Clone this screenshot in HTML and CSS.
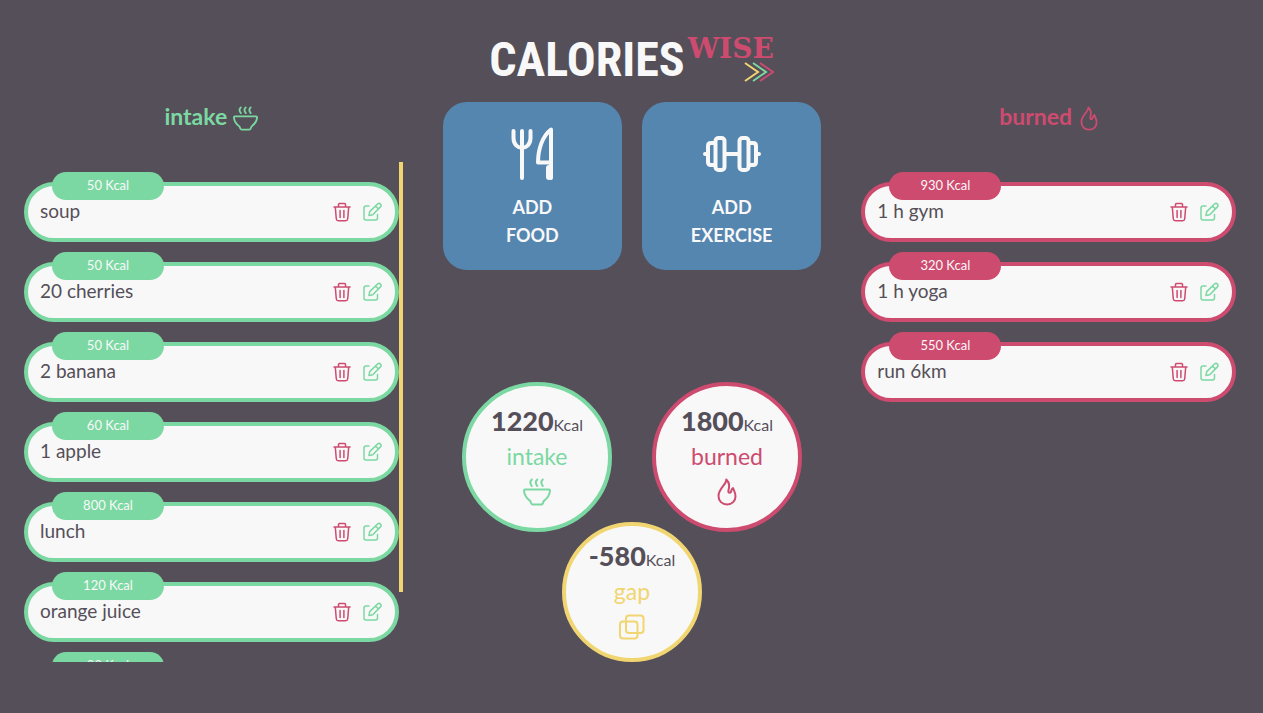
FILE: index.html
```
<!DOCTYPE html>
<html lang="en">
<head>
<meta charset="utf-8">
<meta name="viewport" content="width=device-width, initial-scale=1">
<title>Calories Wise</title>
<link rel="stylesheet" href="styles.css">
</head>
<body>
<svg class="sprite" aria-hidden="true">
  <symbol id="trash" viewBox="0 0 18 20"><path d="M1 5h16M5.500 5V2.500Q5.500 1.500 6.500 1.500h5q1 0 1 1V5M2.300 5l1 12q.2 1.800 2 1.800h7.400q1.800 0 2-1.800l1-12M7.100 8.500v7M10.900 8.500v7"/></symbol>
  <symbol id="edit" viewBox="0 0 20 20"><path d="M6 4H3Q1 4 1 6v10q0 2 2 2h9.500q2 0 2-2v-3.500M6 13.500l.7-3.900L14.500 2q1.600-1.300 2.900 0 1.300 1.400 0 2.900l-7.700 7.800zM12.500 4l3 3"/></symbol>
  <symbol id="bowl" viewBox="0 0 28 28"><path d="M2 11.500h24q1 0 1 1.200-.4 5.800-6.300 10.400l-1 2.400q-.4 1-1.400 1H9.700q-1 0-1.400-1l-1-2.400Q1.400 18.500 1 12.700q0-1.200 1-1.200zM8.800 1.500q-3 2.800 0 6.500M14.300 1.500q-3 2.800 0 6.500M19.800 1.500q-3 2.800 0 6.500"/></symbol>
  <symbol id="flame" viewBox="0 0 20 28"><path d="M9.300 1.500c.3 5-7.800 9-7.800 16.500 0 5 3.700 8.500 8.600 8.500 5 0 8.400-3.500 8.400-8.300 0-3.500-1.600-5.600-2.500-8.100-1.500 1-1.700 2.300-2 3.700-1.100 1.500-3.300 1.200-2.500-1.200.8-4.100 1.500-7.600-2.200-11.100z"/></symbol>
  <symbol id="gap" viewBox="0 0 28 28"><rect x="8" y="2.500" width="17.500" height="17.500" rx="3"/><rect x="2" y="8.500" width="17.500" height="17" rx="3"/></symbol>
</svg>

<header class="header">
  <h1 class="logo">
    <span class="logo-main">CALORIES</span>
    <span class="logo-side">
      <span class="logo-wise">WISE</span>
      <svg class="logo-arrows" viewBox="0 0 30 20" aria-hidden="true">
        <path class="stroke-yellow" d="M1 1l13 9-13 9"/>
        <path class="stroke-green" d="M9 1l13 9-13 9"/>
        <path class="stroke-red" d="M16 1l13 9-13 9"/>
      </svg>
    </span>
  </h1>
</header>

<main class="board">
  <section class="column green">
    <h2 class="column-title">intake <svg class="icon title-bowl"><use href="#bowl"/></svg></h2>
    <div class="scroller">
      <ul class="list">
        <li class="card"><span class="badge">50 Kcal</span><span class="name">soup</span><button class="tool trash" aria-label="Delete"><svg class="icon"><use href="#trash"/></svg></button><button class="tool edit" aria-label="Edit"><svg class="icon"><use href="#edit"/></svg></button></li>
        <li class="card"><span class="badge">50 Kcal</span><span class="name">20 cherries</span><button class="tool trash" aria-label="Delete"><svg class="icon"><use href="#trash"/></svg></button><button class="tool edit" aria-label="Edit"><svg class="icon"><use href="#edit"/></svg></button></li>
        <li class="card"><span class="badge">50 Kcal</span><span class="name">2 banana</span><button class="tool trash" aria-label="Delete"><svg class="icon"><use href="#trash"/></svg></button><button class="tool edit" aria-label="Edit"><svg class="icon"><use href="#edit"/></svg></button></li>
        <li class="card"><span class="badge">60 Kcal</span><span class="name">1 apple</span><button class="tool trash" aria-label="Delete"><svg class="icon"><use href="#trash"/></svg></button><button class="tool edit" aria-label="Edit"><svg class="icon"><use href="#edit"/></svg></button></li>
        <li class="card"><span class="badge">800 Kcal</span><span class="name">lunch</span><button class="tool trash" aria-label="Delete"><svg class="icon"><use href="#trash"/></svg></button><button class="tool edit" aria-label="Edit"><svg class="icon"><use href="#edit"/></svg></button></li>
        <li class="card"><span class="badge">120 Kcal</span><span class="name">orange juice</span><button class="tool trash" aria-label="Delete"><svg class="icon"><use href="#trash"/></svg></button><button class="tool edit" aria-label="Edit"><svg class="icon"><use href="#edit"/></svg></button></li>
        <li class="card"><span class="badge">90 Kcal</span></li>
      </ul>
      <div class="track"><div class="thumb"></div></div>
    </div>
  </section>

  <section class="column center">
    <div class="actions">
      <button class="action">
        <svg class="action-icon" viewBox="0 0 60 60" aria-hidden="true"><path d="M11.500 7v7c0 13 17 13 17 0V7M20 7v47M49 54V5.500C40.500 12 36 25 36 38.500h13"/><path class="handle" d="M47 44v9"/></svg>
        <span>ADD<br>FOOD</span>
      </button>
      <button class="action">
        <svg class="action-icon" viewBox="0 0 60 60" aria-hidden="true"><path d="M3 30h2M23 30h14M55 30h2M13 19H9q-3 0-3 3v16q0 3 3 3h4M47 19h4q3 0 3 3v16q0 3-3 3h-4"/><rect x="13.500" y="14" width="9" height="32" rx="3"/><rect x="37.500" y="14" width="9" height="32" rx="3"/></svg>
        <span>ADD<br>EXERCISE</span>
      </button>
    </div>
    <div class="stats">
      <div class="stat green"><p class="amount"><strong>1220</strong>Kcal</p><p class="label">intake</p><svg class="icon stat-icon"><use href="#bowl"/></svg></div>
      <div class="stat red"><p class="amount"><strong>1800</strong>Kcal</p><p class="label">burned</p><svg class="icon stat-icon"><use href="#flame"/></svg></div>
      <div class="stat yellow"><p class="amount"><strong>-580</strong>Kcal</p><p class="label">gap</p><svg class="icon stat-icon"><use href="#gap"/></svg></div>
    </div>
  </section>

  <section class="column red">
    <h2 class="column-title">burned <svg class="icon title-flame"><use href="#flame"/></svg></h2>
    <div class="scroller">
      <ul class="list">
        <li class="card"><span class="badge">930 Kcal</span><span class="name">1 h gym</span><button class="tool trash" aria-label="Delete"><svg class="icon"><use href="#trash"/></svg></button><button class="tool edit" aria-label="Edit"><svg class="icon"><use href="#edit"/></svg></button></li>
        <li class="card"><span class="badge">320 Kcal</span><span class="name">1 h yoga</span><button class="tool trash" aria-label="Delete"><svg class="icon"><use href="#trash"/></svg></button><button class="tool edit" aria-label="Edit"><svg class="icon"><use href="#edit"/></svg></button></li>
        <li class="card"><span class="badge">550 Kcal</span><span class="name">run 6km</span><button class="tool trash" aria-label="Delete"><svg class="icon"><use href="#trash"/></svg></button><button class="tool edit" aria-label="Edit"><svg class="icon"><use href="#edit"/></svg></button></li>
      </ul>
      <div class="track"></div>
    </div>
  </section>
</main>
</body>
</html>
```
FILE: styles.css
```
:root {
  --dark: #554f59;
  --light: #f8f8f8;
  --green: #7bd8a2;
  --red: #ce4b70;
  --yellow: #f1d570;
  --blue: #5586b0;
}

* { box-sizing: border-box; }

body {
  margin: 0;
  height: 100vh;
  display: flex;
  flex-direction: column;
  overflow: hidden;
  background: var(--dark);
  color: var(--dark);
  font-family: Lato, "Open Sans", sans-serif;
}

h1, h2, p, ul { margin: 0; padding: 0; }
button { border: 0; padding: 0; font: inherit; cursor: pointer; }

.sprite { display: none; }

.icon {
  flex: none;
  fill: none;
  stroke: currentColor;
  stroke-width: 2;
  stroke-linecap: round;
  stroke-linejoin: round;
}

.green { --accent: var(--green); }
.red { --accent: var(--red); }
.yellow { --accent: var(--yellow); }

.header {
  flex: none;
  display: flex;
  justify-content: center;
  padding-top: 36px;
  height: 102px;
}

.logo { display: flex; gap: 3px; height: 48px; }

.logo-main {
  color: var(--light);
  font: bold 48px/48px "Roboto Condensed", Roboto, sans-serif;
}

.logo-side { display: flex; flex-direction: column; align-items: flex-end; }
.logo-wise { color: var(--red); font: bold 28px/26px "DejaVu Serif", serif; }
.logo-arrows { width: 30px; height: 20px; fill: none; stroke-width: 2; }
.stroke-yellow { stroke: var(--yellow); }
.stroke-green { stroke: var(--green); }
.stroke-red { stroke: var(--red); }

.board {
  flex: 1;
  min-height: 0;
  display: grid;
  grid-template-columns: repeat(3, minmax(0, 1fr));
  gap: 40px;
  padding: 0 23px 51px 24px;
}

.column { display: flex; flex-direction: column; min-height: 0; }

.column-title {
  flex: none;
  display: flex;
  justify-content: center;
  gap: 6px;
  height: 60px;
  padding-right: 4px;
  color: var(--accent);
  font-size: 23px;
  line-height: 28px;
}

.title-bowl { width: 25px; height: 25px; margin-top: 4px; }
.title-flame { width: 18px; height: 25px; margin: 4px 0 0 2px; }

.scroller { flex: 1; min-height: 0; display: flex; overflow: hidden; }

.list {
  flex: 1;
  display: flex;
  flex-direction: column;
  gap: 20px;
  padding-top: 20px;
  list-style: none;
}

.track { flex: none; width: 4px; }
.thumb { height: 86%; background: var(--yellow); }

.card {
  flex: none;
  position: relative;
  display: flex;
  align-items: center;
  gap: 12px;
  height: 60px;
  padding: 0 12px;
  border: 4px solid var(--accent);
  border-radius: 30px;
  background: var(--light);
}

.badge {
  position: absolute;
  top: -14px;
  left: 24px;
  width: 112px;
  height: 28px;
  border-radius: 14px;
  background: var(--accent);
  color: var(--light);
  font-size: 13px;
  line-height: 26px;
  text-align: center;
}

.name { flex: 1; padding-bottom: 2px; font-size: 19px; line-height: 24px; }
.tool { display: flex; background: none; }
.tool .icon { width: 18px; height: 20px; stroke-width: 1.500; }
.edit .icon { width: 20px; }
.trash { color: var(--red); }
.edit { color: var(--green); }

.center { justify-content: space-between; }

.actions { display: grid; grid-template-columns: 1fr 1fr; gap: 20px; }

.action {
  display: flex;
  flex-direction: column;
  align-items: center;
  gap: 9px;
  padding: 22px 12px 21px;
  border-radius: 24px;
  background: var(--blue);
  color: var(--light);
  font-size: 18px;
  font-weight: bold;
  line-height: 28px;
}

.action-icon {
  width: 60px;
  height: 60px;
  fill: none;
  stroke: currentColor;
  stroke-width: 4;
  stroke-linecap: round;
  stroke-linejoin: round;
}

.handle { stroke-width: 6; }

.stats {
  display: flex;
  flex-wrap: wrap;
  justify-content: center;
  column-gap: 40px;
}

.stat {
  display: flex;
  flex-direction: column;
  align-items: center;
  width: 150px;
  height: 150px;
  padding-top: 18px;
  border: 4px solid var(--accent);
  border-radius: 50%;
  background: var(--light);
}

.stat.yellow { width: 140px; height: 140px; margin-top: -10px; padding-top: 13px; }

.amount { font-size: 16px; line-height: 34px; }
.amount strong { font-size: 27px; font-weight: 900; }
.label { color: var(--accent); font-size: 23px; line-height: 28px; }
.stat-icon { width: 28px; height: 28px; margin-top: 8px; color: var(--accent); }
```
